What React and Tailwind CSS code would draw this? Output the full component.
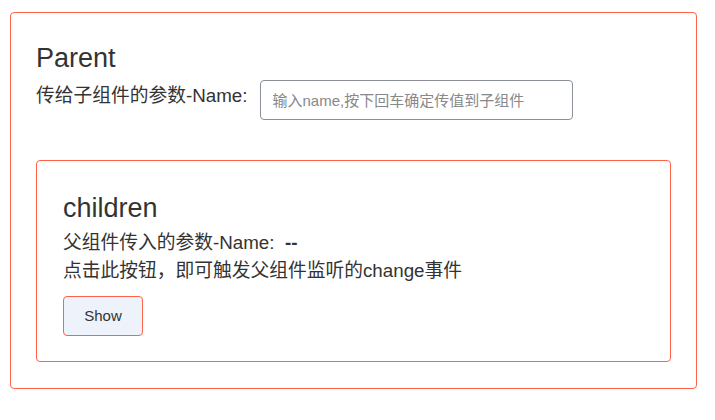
import { useState } from "react";

const font = { fontFamily: '"Liberation Sans", "Noto Sans CJK SC", sans-serif' };

function Children({ name, onChange }) {
  return (
    <div className="rounded-[4px] border border-[#ff6347] px-[26px] pt-[31px] pb-[25px]">
      <h3 className="text-[27px] leading-[32px] text-[#333]">children</h3>
      <p className="mt-[5px] text-[18.75px] leading-[28px] text-[#333]">
        父组件传入的参数-Name:&nbsp;&nbsp;<span className="font-bold">{name || "--"}</span>
      </p>
      <p className="text-[18.75px] leading-[28px] text-[#333]">
        点击此按钮，即可触发父组件监听的change事件
      </p>
      <button
        type="button"
        onClick={onChange}
        className="mt-[11px] h-[40px] w-[80px] rounded-[4px] border border-[#ff6347] bg-[#eef2fa] text-[15px] text-[#333]"
      >
        Show
      </button>
    </div>
  );
}

export default function App() {
  const [value, setValue] = useState("");
  const [name, setName] = useState("");

  return (
    <div className="bg-white pl-[10px] pr-[18px] pt-[12px]" style={font}>
      <div className="rounded-[4px] border border-[#ff6347] px-[25px] pt-[29px] pb-[26px]">
        <h3 className="text-[27px] leading-[32px] text-[#333]">Parent</h3>
        <div className="mt-[6px] flex items-center">
          <label className="mr-[13px] mb-[8px] text-[18.75px] leading-[28px] text-[#333]">
            传给子组件的参数-Name:
          </label>
          <input
            value={value}
            onChange={(e) => setValue(e.target.value)}
            onKeyDown={(e) => e.key === "Enter" && setName(value)}
            placeholder="输入name,按下回车确定传值到子组件"
            className="h-[40px] w-[313px] rounded-[4px] border border-[#8c909a] px-[11px] text-[15px] text-[#333] outline-none placeholder:text-[#888]"
          />
        </div>
        <div className="mt-[40px]">
          <Children name={name} onChange={() => alert("change")} />
        </div>
      </div>
    </div>
  );
}
